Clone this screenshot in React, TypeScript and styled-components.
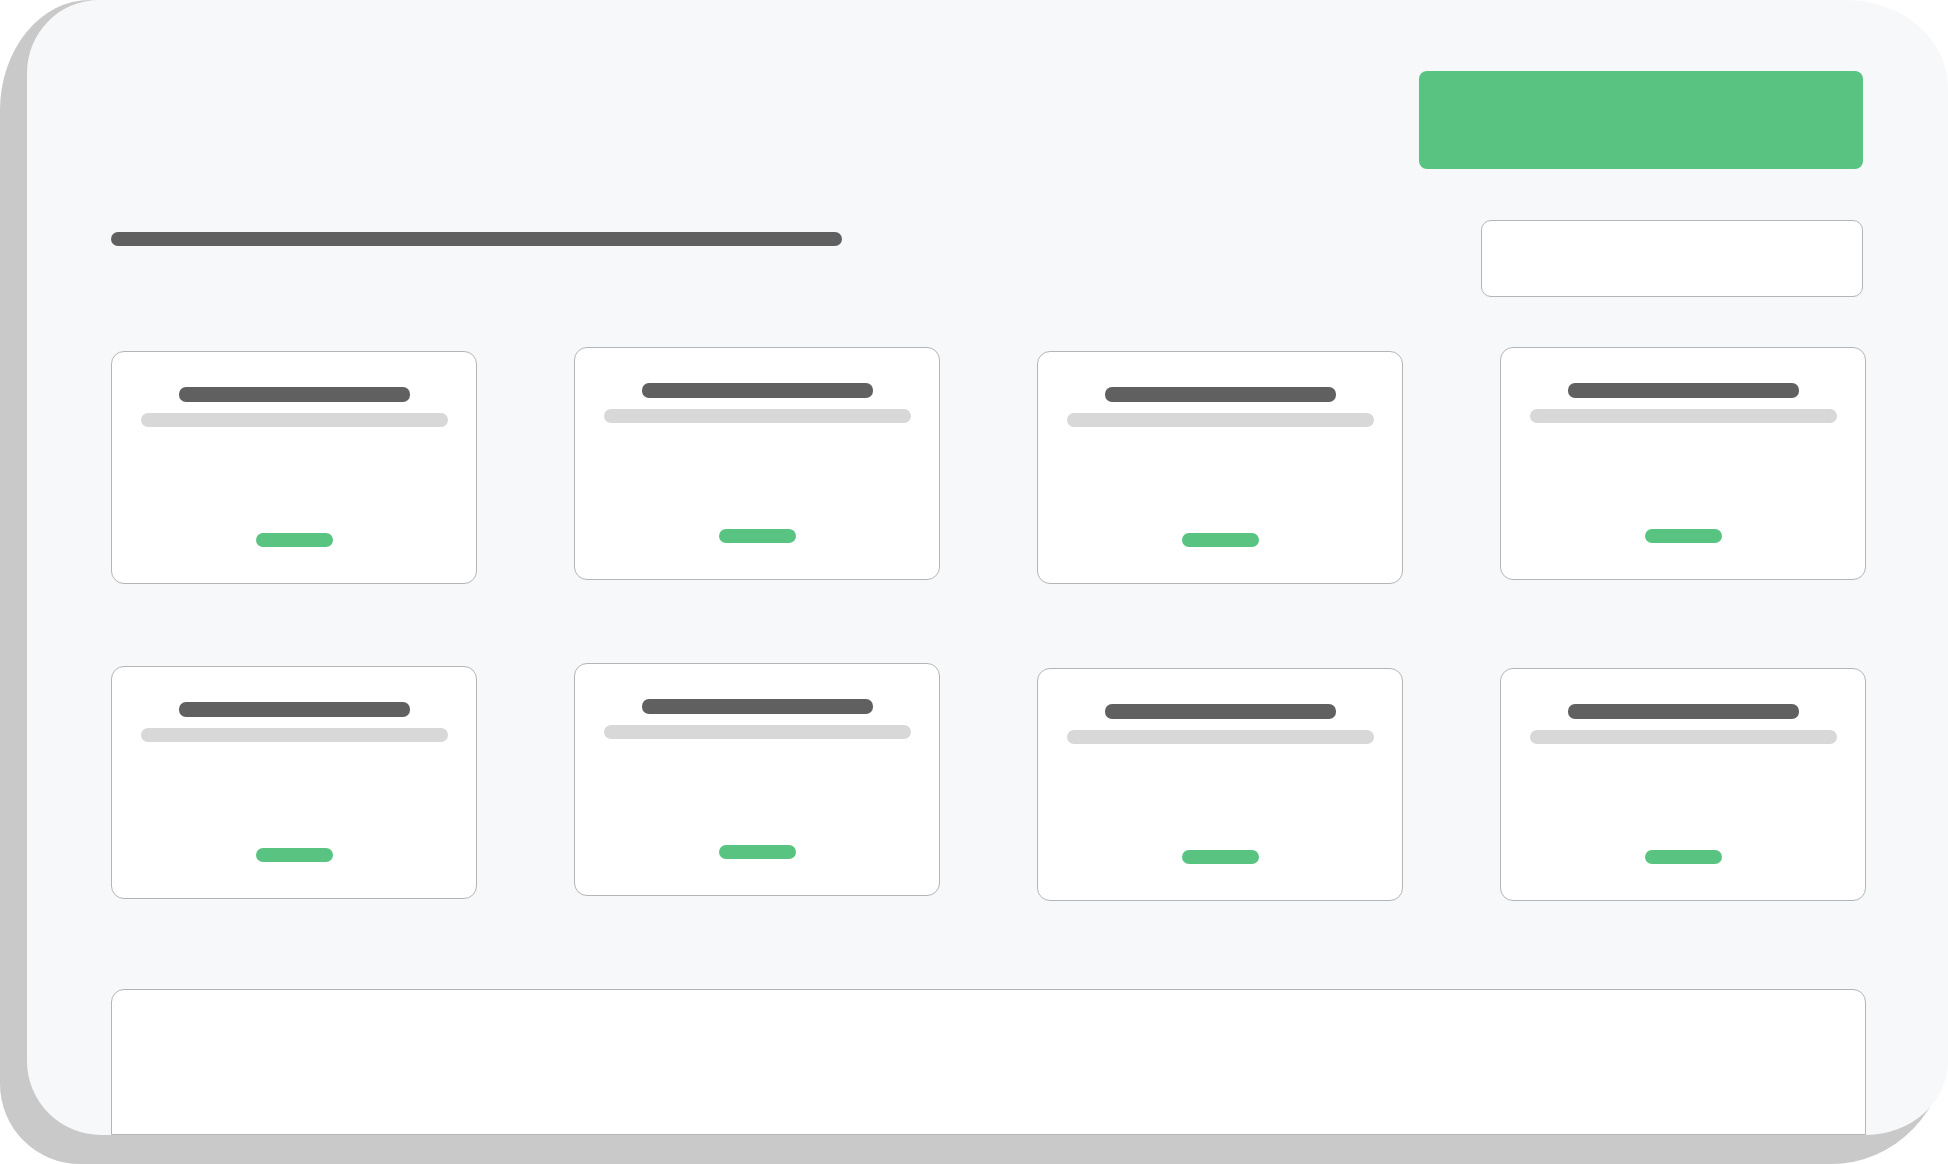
import * as React from "react";
import { styled, createGlobalStyle } from "styled-components";

const GlobalStyle = createGlobalStyle`
  html, body {
    margin: 0;
    padding: 0;
    background: #ffffff;
    font-family: "Liberation Sans", Arial, sans-serif;
  }
  * {
    box-sizing: border-box;
  }
`;

const green = "#59c381";
const dark = "#606060";
const light = "#d8d8d8";
const line = "#b5b5b5";

const Device = styled.div`
  display: flex;
  width: 1948px;
  height: 1164px;
  padding: 0 0 29px 27px;
  background: #c9c9c9;
  border-radius: 90px 140px 117px 80px / 110px 140px 122px 80px;
`;

const Screen = styled.main`
  flex: 1;
  display: flex;
  flex-direction: column;
  padding: 71px 82px 0 84px;
  background: #f7f8fa;
  border-radius: 72px 102px 82px 74px / 73px 88px 74px 74px;
  overflow: hidden;
`;

const Toolbar = styled.header`
  display: flex;
  justify-content: flex-end;
  padding-right: 3px;
`;

const PrimaryButton = styled.button`
  width: 444px;
  height: 98px;
  border: none;
  border-radius: 8px;
  background: ${green};
  padding: 0;
`;

const FilterRow = styled.div`
  display: flex;
  justify-content: space-between;
  align-items: flex-start;
  margin-top: 51px;
  padding-right: 3px;
`;

const Bar = styled.span<{ $w: number; $tone: "dark" | "light" | "green" }>`
  display: block;
  width: ${(p) => p.$w}px;
  height: 14px;
  border-radius: 7px;
  background: ${(p) =>
    p.$tone === "dark" ? dark : p.$tone === "light" ? light : green};
`;

const PageTitle = styled(Bar)`
  margin-top: 12px;
`;

const Search = styled.input`
  width: 382px;
  height: 77px;
  border: 1px solid ${line};
  border-radius: 10px;
  background: #ffffff;
  outline: none;
`;

const Grid = styled.section`
  display: grid;
  grid-template-columns: repeat(4, 366px);
  column-gap: 97px;
  row-gap: 79px;
  align-items: start;
  margin-top: 50px;
`;

const Card = styled.article<{ $shift: number }>`
  display: flex;
  flex-direction: column;
  align-items: center;
  height: 233px;
  margin-top: ${(p) => p.$shift}px;
  padding: 35px 0 36px;
  background: #ffffff;
  border: 1px solid ${line};
  border-radius: 13px;
`;

const CardTitle = styled(Bar)`
  height: 15px;
`;

const CardText = styled(Bar)`
  margin-top: 11px;
`;

const CardAction = styled(Bar)`
  margin-top: auto;
`;

const Footer = styled.section`
  flex: 1;
  margin-top: 88px;
  background: #ffffff;
  border: 1px solid ${line};
  border-radius: 13px 13px 0 0;
`;

const shifts = [4, 0, 4, 0, 3, 0, 5, 5];

export default function App() {
  return (
    <>
      <GlobalStyle />
      <Device>
        <Screen>
          <Toolbar>
            <PrimaryButton aria-label="primary action" />
          </Toolbar>
          <FilterRow>
            <PageTitle $w={731} $tone="dark" />
            <Search aria-label="search" />
          </FilterRow>
          <Grid>
            {shifts.map((s, i) => (
              <Card key={i} $shift={s}>
                <CardTitle $w={231} $tone="dark" />
                <CardText $w={307} $tone="light" />
                <CardAction $w={77} $tone="green" />
              </Card>
            ))}
          </Grid>
          <Footer />
        </Screen>
      </Device>
    </>
  );
}
